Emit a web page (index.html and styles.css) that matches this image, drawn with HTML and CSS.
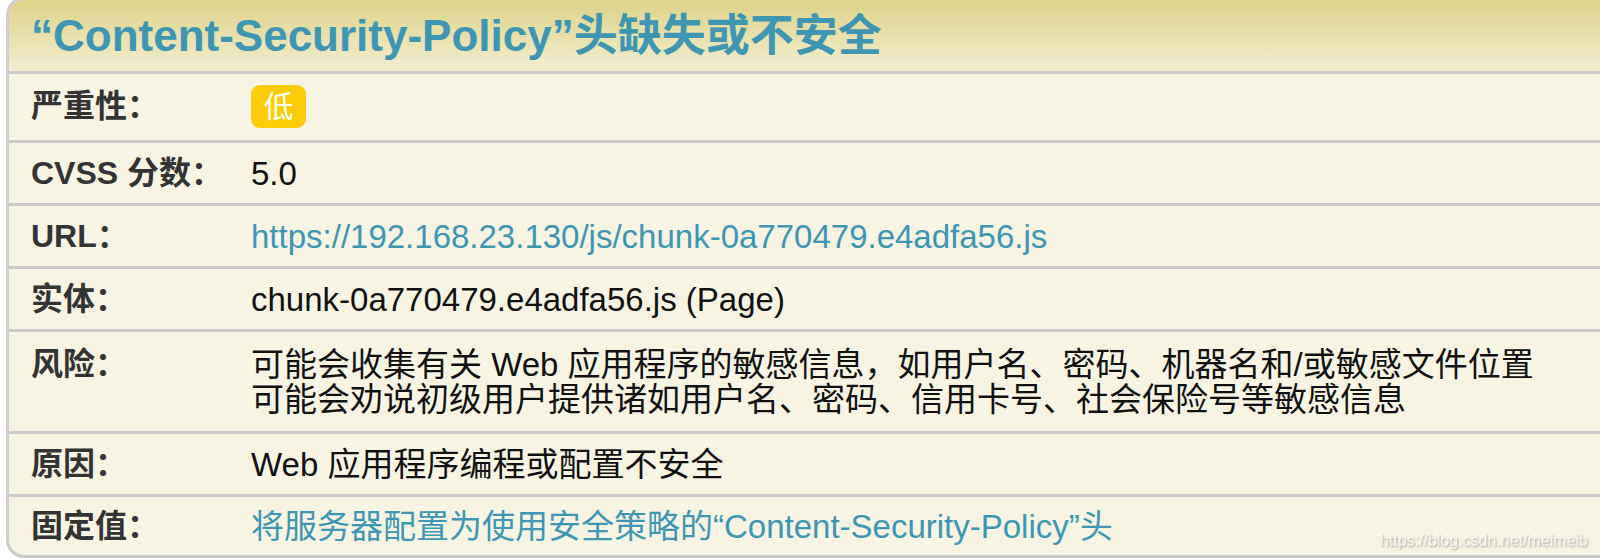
FILE: index.html
```html
<!DOCTYPE html>
<html lang="zh-CN">
<head>
  <meta charset="UTF-8">
  <title>Content-Security-Policy 头缺失或不安全</title>
  <link rel="stylesheet" href="styles.css">
</head>
<body>
  <!-- 漏洞详情卡片 -->
  <div class="issue">
    <div class="issue-head">
      <h1>“Content-Security-Policy”头缺失或不安全</h1>
    </div>

    <div class="row row-severity">
      <div class="label">严重性：</div>
      <div class="value"><span class="badge">低</span></div>
    </div>
    <div class="row">
      <div class="label">CVSS 分数：</div>
      <div class="value">5.0</div>
    </div>
    <div class="row">
      <div class="label">URL：</div>
      <div class="value link">https://192.168.23.130/js/chunk-0a770479.e4adfa56.js</div>
    </div>
    <div class="row">
      <div class="label">实体：</div>
      <div class="value">chunk-0a770479.e4adfa56.js (Page)</div>
    </div>
    <div class="row row-risk">
      <div class="label">风险：</div>
      <div class="value">
        可能会收集有关 Web 应用程序的敏感信息，如用户名、密码、机器名和/或敏感文件位置<br>
        可能会劝说初级用户提供诸如用户名、密码、信用卡号、社会保险号等敏感信息
      </div>
    </div>
    <div class="row">
      <div class="label">原因：</div>
      <div class="value">Web 应用程序编程或配置不安全</div>
    </div>
    <div class="row row-last">
      <div class="label">固定值：</div>
      <div class="value link">将服务器配置为使用安全策略的“Content-Security-Policy”头</div>
    </div>
  </div>

  <div class="watermark">https://blog.csdn.net/meimeib</div>
</body>
</html>
```

FILE: styles.css
```css
body {
  margin: 0;
  background: #ffffff;
  font-family: "Liberation Sans", Arial, "Noto Sans CJK SC", sans-serif;
  overflow: hidden;
  position: relative;
  height: 558px;
}

/* ===== 卡片外框 ===== */
.issue {
  margin: -3px -30px 0 6px;
  border: 3px solid #cccccc;
  border-radius: 18px;
  background: #f7f4e4;
  overflow: hidden;
}

.issue-head {
  height: 71px;
  padding-left: 22px;
  background: linear-gradient(to bottom, #ddd288, #f3eed0);
}

.issue-head h1 {
  margin: 0;
  font-size: 44px;
  line-height: 72px;
  font-weight: bold;
  color: #3e96b2;
  white-space: nowrap;
}

/* ===== 每一行 ===== */
.row {
  display: grid;
  grid-template-columns: 242px 1fr;
  align-items: start;
  border-top: 3px solid #cccccc;
  padding: 13px 0 12px;
  line-height: 35px;
}

.label {
  padding-left: 22px;
  font-size: 32px;
  font-weight: bold;
  color: #333333;
  white-space: nowrap;
}

.value {
  font-size: 33px;
  color: #111111;
  white-space: nowrap;
}

.link {
  color: #3e96b2;
}

.row-severity {
  padding: 11px 0 12px;
  align-items: center;
}

.row-risk {
  padding: 15px 0 14px;
}

.row-last {
  padding: 12px 0 11px;
}

.badge {
  display: inline-block;
  width: 55px;
  height: 43px;
  line-height: 43px;
  border-radius: 9px;
  background: #ffcc05;
  color: #ffffff;
  font-size: 30px;
  text-align: center;
  vertical-align: middle;
}

/* ===== 水印 ===== */
.watermark {
  position: absolute;
  right: 12px;
  bottom: 8px;
  font-size: 16px;
  color: rgba(255, 255, 255, 0.85);
  text-shadow: 1px 1px 2px rgba(0, 0, 0, 0.35);
}
```
